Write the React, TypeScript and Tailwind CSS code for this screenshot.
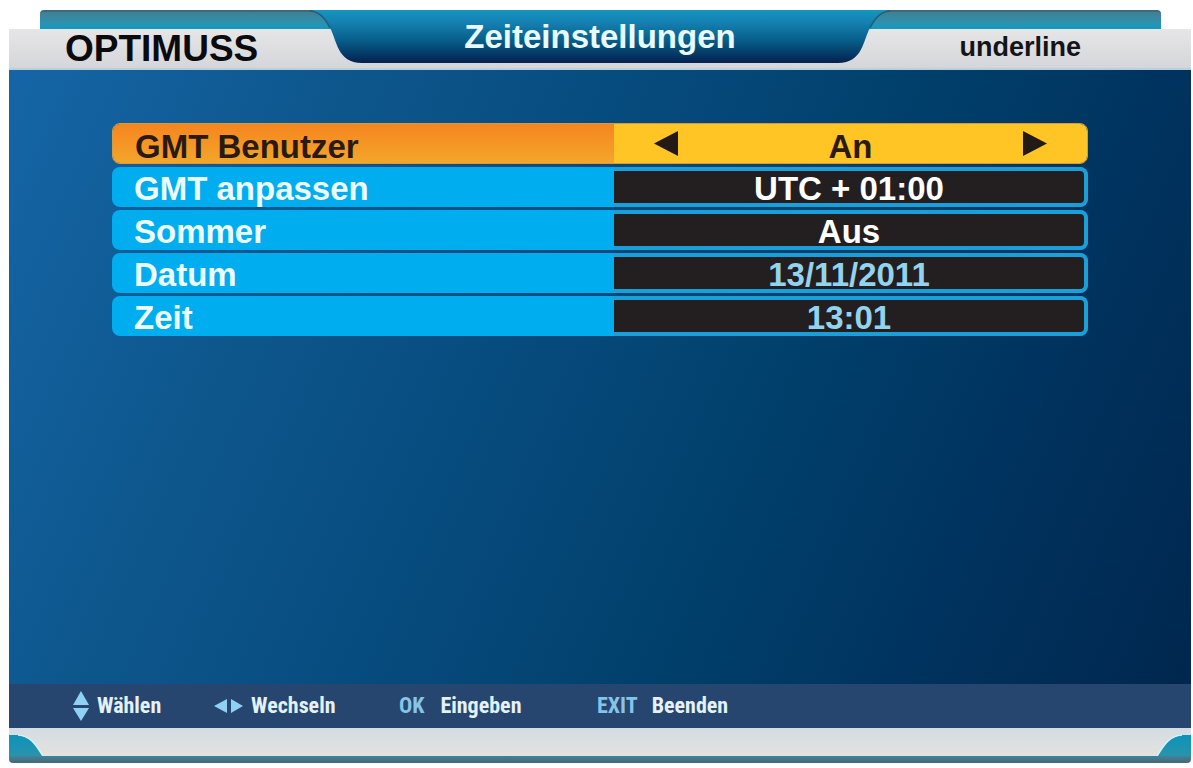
import { useState } from "react";

const hintText = "text-[22px] leading-6 font-bold font-['Liberation_Sans_Narrow','Roboto_Condensed','Open_Sans_Condensed','Roboto',sans-serif]";

const settings = [
  { id: 1, label: "GMT anpassen", value: "UTC + 01:00", editable: true },
  { id: 2, label: "Sommer", value: "Aus", editable: true },
  { id: 3, label: "Datum", value: "13/11/2011", editable: false },
  { id: 4, label: "Zeit", value: "13:01", editable: false }
];

function TabEdge({ side }: { side: "left" | "right" }) {
  return (
    <svg
      width="54"
      height="53"
      viewBox="0 0 54 53"
      aria-hidden="true"
      className={side === "right" ? "shrink-0 -scale-x-100" : "shrink-0"}
    >
      <defs>
        <linearGradient id={`tab-${side}`} x1="0" y1="0" x2="0" y2="53" gradientUnits="userSpaceOnUse">
          <stop offset="0" stopColor="#1496bd" />
          <stop offset="0.25" stopColor="#147fb0" />
          <stop offset="0.6" stopColor="#075b86" />
          <stop offset="1" stopColor="#04204f" />
        </linearGradient>
      </defs>
      <path d="M0 0C10 2 15 8 20 18C27 30 27 53 52 53H54V0Z" fill={`url(#tab-${side})`} />
      <path d="M0 1C10 2 15 8 20 18" fill="none" stroke="#1f5f7c" strokeWidth="1.5" />
    </svg>
  );
}

function Header() {
  return (
    <header className="grid h-[60px]">
      <div className="col-start-1 row-start-1 ml-[31px] mr-[30px] h-[19px] rounded-t border-t-2 border-[#376b7d] bg-linear-to-b from-[#417f93] to-[#0c9bc0]" />
      <div className="col-start-1 row-start-1 mt-[19px] flex items-center justify-between border-b-2 border-[#b9cfdb] bg-linear-to-b from-[#e6e6e7] to-[#d5d6da] pl-[56px] pr-[110px]">
        <span className="text-[37px] leading-9 font-bold text-[#0b0b0d]">OPTIMUSS</span>
        <span className="pb-1 text-[27px] leading-8 font-bold text-[#141416]">underline</span>
      </div>
      <div className="col-start-1 row-start-1 flex h-[53px] w-[49%] justify-self-center">
        <TabEdge side="left" />
        <h1 className="flex-1 bg-[linear-gradient(180deg,#1496bd_0%,#147fb0_25%,#075b86_60%,#04204f_100%)] pt-[9px] text-center text-[33px] leading-9 font-bold whitespace-nowrap text-[#e8fafd]">
          Zeiteinstellungen
        </h1>
        <TabEdge side="right" />
      </div>
    </header>
  );
}

function KeyHints() {
  return (
    <ul className={`grid h-11 grid-cols-[141px_185px_198px_auto] items-center bg-[#27466f] pl-16 text-[#e3f1f8] ${hintText}`}>
      <li className="flex items-center gap-2">
        <svg width="16" height="30" viewBox="0 0 16 30" fill="#8fd0f4" aria-hidden="true">
          <path d="M8 0L16 14H0ZM0 17H16L8 30Z" />
        </svg>
        Wählen
      </li>
      <li className="flex items-center gap-2">
        <svg width="29" height="14" viewBox="0 0 29 14" fill="#8fd0f4" aria-hidden="true">
          <path d="M0 7L13 0V14ZM17 0L29 7L17 14Z" />
        </svg>
        Wechseln
      </li>
      <li className="flex gap-4">
        <span className="text-[#85c5e8]">OK</span>
        Eingeben
      </li>
      <li className="flex gap-3.5">
        <span className="text-[#85c5e8]">EXIT</span>
        Beenden
      </li>
    </ul>
  );
}

function Corner({ side }: { side: "left" | "right" }) {
  return (
    <svg
      width="35"
      height="21"
      viewBox="0 0 35 21"
      aria-hidden="true"
      className={side === "right" ? "-scale-x-100" : ""}
    >
      <defs>
        <linearGradient id={`corner-${side}`} x1="0" y1="0" x2="0" y2="1">
          <stop offset="0" stopColor="#0b93bd" />
          <stop offset="1" stopColor="#2b93ab" />
        </linearGradient>
      </defs>
      <path d="M0 0H9C22 1 27 10 34 21H0Z" fill={`url(#corner-${side})`} />
      <path d="M9 0C22 1 27 10 34 21" fill="none" stroke="#d3f4fa" strokeWidth="1.5" />
    </svg>
  );
}

export default function App() {
  const [gmtUser, setGmtUser] = useState(true);
  const toggle = () => setGmtUser(!gmtUser);

  return (
    <div className="flex min-h-screen flex-col bg-white pt-[10px] pr-0.5 pb-[5px] pl-[9px] font-['Liberation_Sans',Arial,sans-serif]">
      <Header />

      <main className="flex-1 bg-[linear-gradient(114deg,#1565a6_0%,#0d568c_24%,#064a7c_45%,#01406c_62%,#00335f_80%,#00274e_100%)] px-[103px] pt-[53px]">
        <div className="space-y-[3px] text-[33px] leading-8 font-bold">
          <div className="grid h-[41px] grid-cols-[502fr_474fr] overflow-hidden rounded-lg border border-[#d99a3c]">
            <div className="bg-linear-to-b from-[#f5851f] to-[#f3a62b] pt-[7px] pl-[22px] text-[#2b1a14]">GMT Benutzer</div>
            <div className="flex items-start justify-between bg-[#fec524] px-[40px] pt-[7px] text-[#2b1a14]">
              <button type="button" aria-label="Zurück" onClick={toggle} className="cursor-pointer">
                <svg width="24" height="25" viewBox="0 0 24 25" fill="#231a17">
                  <path d="M0 12.5L24 0V25Z" />
                </svg>
              </button>
              <span>{gmtUser ? "An" : "Aus"}</span>
              <button type="button" aria-label="Weiter" onClick={toggle} className="cursor-pointer">
                <svg width="24" height="25" viewBox="0 0 24 25" fill="#231a17">
                  <path d="M24 12.5L0 0V25Z" />
                </svg>
              </button>
            </div>
          </div>

          {settings.map((row) => (
            <div key={row.id} className="grid h-10 grid-cols-[502fr_474fr] overflow-hidden rounded-lg bg-[#00aeef]">
              <div className="pt-1.5 pl-[22px] text-[#eefcff]">{row.label}</div>
              <div className="rounded-r-lg border-y-4 border-r-4 border-[#1b9fd8] bg-[#231f20] pt-1 text-center leading-7">
                <span className={row.editable ? "text-white" : "text-[#93d3ee]"}>{row.value}</span>
              </div>
            </div>
          ))}
        </div>
      </main>

      <footer>
        <KeyHints />
        <div className="flex h-7 items-end justify-between bg-linear-to-b from-[#d3dde3] to-[#e3e2de]">
          <Corner side="left" />
          <Corner side="right" />
        </div>
        <div className="h-[7px] rounded-b bg-linear-to-b from-[#3f8499] to-[#486676]" />
      </footer>
    </div>
  );
}
